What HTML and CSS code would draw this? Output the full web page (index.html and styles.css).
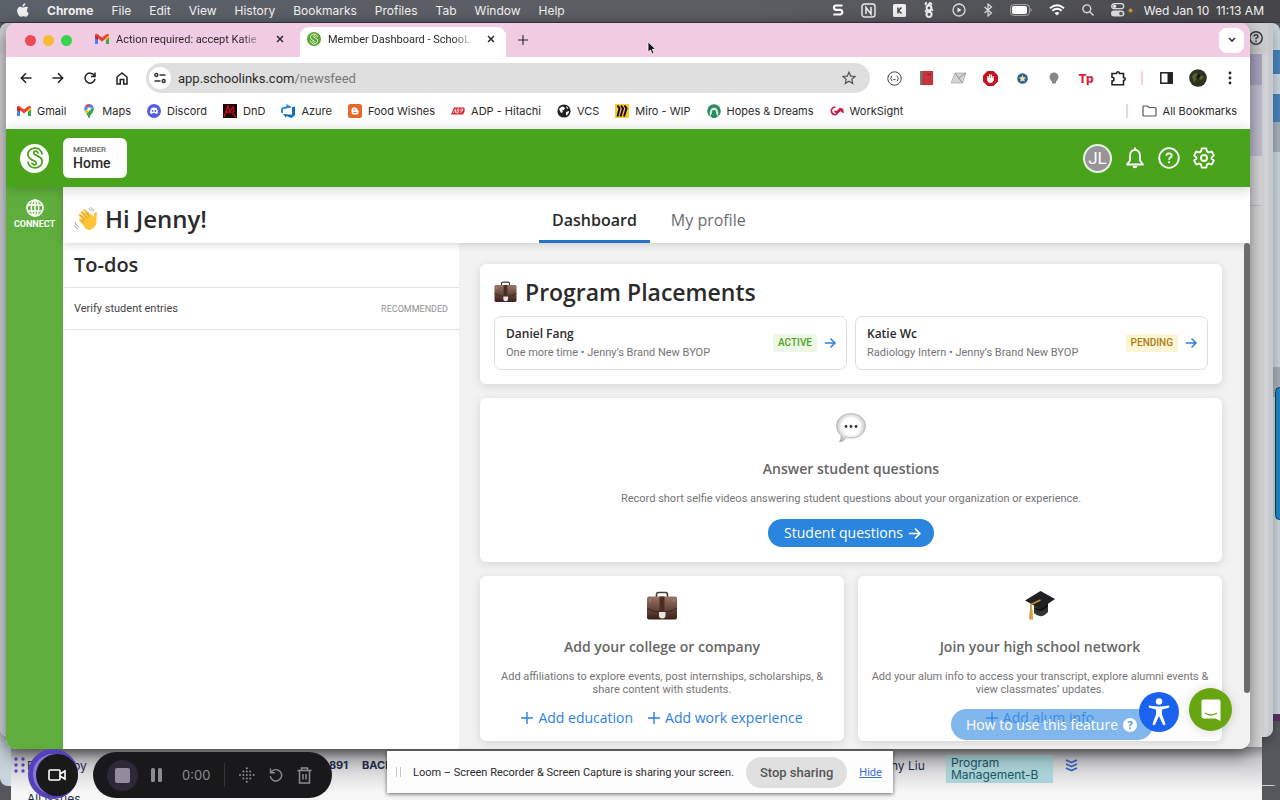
FILE: index.html
```html
<!DOCTYPE html>
<html lang="en">
<head>
  <meta charset="UTF-8">
  <title>Member Dashboard - SchooLinks</title>
  <link rel="stylesheet" href="styles.css">
</head>
<body>
  <!-- shared symbols -->
  <svg class="defs" width="0" height="0" aria-hidden="true">
    <defs>
      <linearGradient id="leather" x1="0" y1="0" x2="0" y2="1">
        <stop offset="0" stop-color="#9a7565"/><stop offset=".5" stop-color="#6b4a3e"/><stop offset="1" stop-color="#38211b"/>
      </linearGradient>
      <radialGradient id="bubble" cx=".5" cy=".45" r=".6">
        <stop offset=".5" stop-color="#fff"/><stop offset="1" stop-color="#aaa"/>
      </radialGradient>
      <symbol id="i-case" viewBox="0 0 30 30">
        <path d="M9.500 6V3.500Q9.500 1.500 11.500 1.500h7q2 0 2 2V6" fill="none" stroke="#4d3a33" stroke-width="1.600"/>
        <rect x="0" y="5.500" width="30" height="23" rx="2" fill="url(#leather)"/>
        <path d="M0 17q6 4 12 4h6q6 0 12-4" fill="none" stroke="#3a231c" stroke-width="1"/>
        <path d="M12.500 5.500h5V21h-5z" fill="#4b2c24"/>
        <path d="M12 21h6.500v3.500q0 3-3.200 3-3.300 0-3.300-3z" fill="#e8e4e2"/>
        <path d="M3 8v3M27 8v3" stroke="#b5937f" stroke-width=".8"/>
      </symbol>
      <symbol id="i-gmail" viewBox="0 0 14 14">
        <path d="M0 3.500V12h3V6z" fill="#4285f4"/><path d="M14 3.500V12h-3V6z" fill="#34a853"/>
        <path d="M0 4V3q1-2 3-.6L7 5.500l4-3.100q2-1.400 3 .6v1L7 9.500z" fill="#ea4335"/>
        <path d="M0 3.200 3 5.300V8L0 5.800z" fill="#c5221f"/><path d="M14 3.200 11 5.300V8l3-2.200z" fill="#fbbc04"/>
      </symbol>
      <symbol id="i-links" viewBox="0 0 24 24">
        <path d="M18 8.500C17.500 5 14.500 3.200 11.500 3.500 7.500 3.900 5.300 7 6 10c.4 1.700 1.500 2.600 3 3.400l3.200 1.600c1.700 1 1 3-.8 2.800-1-.1-1.500-.6-2-1.300M6 15.500C6.500 19 9.500 20.800 12.500 20.500 16.500 20.100 18.700 17 18 14c-.4-1.700-1.500-2.600-3-3.400l-3.200-1.600c-1.700-1-1-3 .8-2.800 1 .1 1.500.6 2 1.300" fill="none" stroke="currentColor" stroke-width="1.500" stroke-linecap="round"/>
      </symbol>
      <symbol id="i-arrow" viewBox="0 0 12 12">
        <path d="M.8 6h10M6.500 1.500 11 6l-4.500 4.500" fill="none" stroke="currentColor" stroke-width="1.500"/>
      </symbol>
      <symbol id="i-close" viewBox="0 0 8 8"><path d="m1 1 6 6M7 1 1 7" stroke="currentColor" stroke-width="1.500"/></symbol>
      <symbol id="i-plus" viewBox="0 0 12 12"><path d="M6 0v12M0 6h12" stroke="currentColor" stroke-width="1.400"/></symbol>
    </defs>
  </svg>

  <nav class="menubar">
    <svg width="12" height="14" viewBox="0 0 12 14" fill="#f0f0f0"><path d="M8.200 0q.2 1.900-1 2.900-.8.800-1.700.7Q5.400 2.200 6.300 1.200 7.200.2 8.200 0zM11.300 4.800Q9.800 5.800 9.900 7.400q.1 2 1.900 2.800-1 3-2.700 3.600-.7.100-1.400-.3-1.400-.6-2.700 0-1 .5-1.600.3Q1.200 13.100.4 9.600-.3 6.700 1 5.100 2.400 3.400 4.300 4q1.400.6 2 .5 2-.9 3-.8 1.300.2 2 1.100z"/></svg>
    <b>Chrome</b><span>File</span><span>Edit</span><span>View</span><span>History</span><span>Bookmarks</span><span>Profiles</span><span>Tab</span><span>Window</span><span>Help</span>
    <div class="status">
      <svg width="12" height="14" viewBox="0 0 12 14" fill="none" stroke="#fff" stroke-width="2.200"><path d="M10.500 2.500H4Q2 2.500 2 4.600t2 2.200h4q2.200 0 2.200 2.300T8 11.500H1.300"/></svg>
      <svg width="15" height="15" viewBox="0 0 15 15" fill="none" stroke="#eee"><rect x="1" y="1" width="13" height="13" rx="2.500" stroke-width="1.400"/><path d="M5 11V4.500l5 6.500V4" stroke-width="1.500"/></svg>
      <svg width="13" height="13" viewBox="0 0 13 13"><rect width="13" height="13" rx="1.500" fill="#eee"/><path d="M5 3.500v6M8.500 3.500 5.500 6.500l3 3" fill="none" stroke="#444" stroke-width="1.500"/></svg>
      <svg width="12" height="16" viewBox="0 0 12 16" fill="none" stroke="#eee" stroke-width="2"><circle cx="6" cy="6" r="2.400"/><circle cx="6" cy="12.300" r="2.600"/><path d="M3 3q-1-2 1-2.500M5 3.500 7 1l2 1.500M8.500 8.500 10 7.500M3.500 9.500 2 8.500"/></svg>
      <svg width="14" height="14" viewBox="0 0 14 14" fill="none" stroke="#ddd" stroke-width="1.300"><circle cx="7" cy="7" r="6"/><path d="M5.500 4.500v5L9.500 7z" fill="#eee" stroke="none"/></svg>
      <svg width="10" height="14" viewBox="0 0 10 14" fill="none" stroke="#ddd" stroke-width="1.200"><path d="m1.500 4 7 6L5 13V1l3.500 3-7 6"/></svg>
      <svg width="22" height="12" viewBox="0 0 22 12"><rect x=".6" y=".6" width="18.800" height="10.800" rx="3" fill="none" stroke="#aaa"/><rect x="2" y="2" width="15" height="8" rx="1.800" fill="#fff"/><path d="M20.500 4v4q1.200-.5 1.200-2t-1.200-2z" fill="#aaa"/></svg>
      <svg width="16" height="12" viewBox="0 0 16 12" fill="none" stroke="#fff" stroke-width="1.800"><path d="M1 4.200q7-6 14 0M3.300 6.800q4.700-4 9.400 0"/><path d="M5.500 9q2.500-2 5 0L8 11.600z" fill="#fff" stroke="none"/></svg>
      <svg width="12" height="12" viewBox="0 0 12 12" fill="none" stroke="#ddd" stroke-width="1.400"><circle cx="4.800" cy="4.800" r="3.900"/><path d="m7.700 7.700 3.800 3.800"/></svg>
      <svg width="22" height="14" viewBox="0 0 22 14"><rect x=".7" y=".7" width="12" height="5" rx="2.500" fill="none" stroke="#ddd" stroke-width="1.300"/><circle cx="3.500" cy="3.200" r="1.800" fill="#ddd"/><rect x="0" y="7.500" width="13.400" height="6" rx="3" fill="#ddd"/><circle cx="10" cy="10.500" r="1.800" fill="#555"/><circle cx="19.500" cy="7.500" r="2" fill="#d18b33"/></svg>
      <time>Wed Jan 10&nbsp; 11:13 AM</time>
    </div>
  </nav>

  <div class="desktop">
    <div class="win-far"><i class="far-blue"></i><i class="far-blue"></i><i class="far-grey"></i><i class="far-panel"></i><i class="far-purple"></i></div>
    <div class="far-handle"></div>
    <div class="win-back">
      <svg width="14" height="14" viewBox="0 0 14 14" fill="none" stroke="#333" stroke-width="1.400"><circle cx="7" cy="7" r="6.200"/><path d="M5 5.500Q5 3.700 7 3.700t2 1.800Q9 6.800 7 7.300v1M7 9.500V11"/></svg>
    </div>

    <section class="win-issues">
      <div class="issues-chrome"></div>
      <div class="issue-row">
        <svg width="16" height="16" viewBox="0 0 16 16" fill="#5b45c8"><circle cx="5" cy="2" r="1.700"/><circle cx="12" cy="2" r="1.700"/><circle cx="5" cy="8" r="1.700"/><circle cx="12" cy="8" r="1.700"/><circle cx="5" cy="14" r="1.700"/><circle cx="12" cy="14" r="1.700"/></svg>
        <span>Filtered by</span>
        <b class="key">SL-891</b>
        <b class="state">BACKLOG</b>
        <span>Jenny Liu</span>
        <span class="team">Program Management-B</span>
        <svg class="lowest" width="13" height="13" viewBox="0 0 13 13" fill="none" stroke="#3463c0" stroke-width="1.800"><path d="M1 1l5.500 2.500L12 1M1 5l5.500 2.500L12 5M1 9l5.500 2.500L12 9"/></svg>
      </div>
      <div class="all-issues">All issues</div>
    </section>

    <main class="browser">
      <div class="tabstrip">
        <div class="lights"><i></i><i></i><i></i></div>
        <div class="tab">
          <svg width="14" height="14"><use href="#i-gmail"/></svg>
          <span>Action required: accept Katie</span>
          <button aria-label="Close tab"><svg width="8" height="8"><use href="#i-close"/></svg></button>
        </div>
        <div class="tab active">
          <svg class="fav" width="14" height="14" viewBox="0 0 24 24"><use href="#i-links"/></svg>
          <span>Member Dashboard - SchooL</span>
          <button aria-label="Close tab"><svg width="8" height="8"><use href="#i-close"/></svg></button>
        </div>
        <button class="new-tab" aria-label="New tab"><svg width="10" height="10"><use href="#i-plus"/></svg></button>
        <button class="tab-search" aria-label="Search tabs"><svg width="8" height="6" viewBox="0 0 8 6" fill="none" stroke="#333" stroke-width="1.600"><path d="m1 1 3 3 3-3"/></svg></button>
      </div>

      <div class="toolbar">
        <button aria-label="Back"><svg width="12" height="12" viewBox="0 0 12 12" fill="none" stroke="#222" stroke-width="1.500"><path d="M11.500 6H1.500M6 1.300 1.300 6 6 10.700"/></svg></button>
        <button aria-label="Forward"><svg width="12" height="12" viewBox="0 0 12 12" fill="none" stroke="#222" stroke-width="1.500"><path d="M.5 6h10M6 1.300 10.700 6 6 10.700"/></svg></button>
        <button aria-label="Reload"><svg width="12" height="12" viewBox="0 0 12 12" fill="none" stroke="#222" stroke-width="1.500"><path d="M10.300 3.500A5 5 0 1 0 11 6.800M11 .5v4H7"/></svg></button>
        <button aria-label="Home"><svg width="12" height="13" viewBox="0 0 12 13" fill="none" stroke="#222" stroke-width="1.500"><path d="M1 12V5l5-4 5 4v7H7.700V7.500H4.300V12z"/></svg></button>
        <div class="omnibox">
          <i class="site"><svg width="12" height="12" viewBox="0 0 12 12" fill="none" stroke="#333" stroke-width="1.400"><circle cx="2.300" cy="3" r="1.500"/><path d="M5.500 3h6M.5 9h6"/><circle cx="9.700" cy="9" r="1.500"/></svg></i>
          <div class="url">app.schoolinks.com<span>/newsfeed</span></div>
          <svg width="14" height="14" viewBox="0 0 14 14" fill="none" stroke="#555" stroke-width="1.200"><path d="m7 1.200 1.700 3.900 4.300.4-3.200 2.800.9 4.200L7 10.300l-3.700 2.200.9-4.200L1 5.500l4.300-.4z"/></svg>
        </div>
        <div class="ext">
          <button aria-label="JSON"><svg width="15" height="15" viewBox="0 0 15 15" fill="none" stroke="#444"><circle cx="7.500" cy="7.500" r="6.700"/><path d="M5.300 5q-1 0-1 1.300 0 1-.8 1.200.8.200.8 1.200Q4.300 10 5.300 10M9.700 5q1 0 1 1.300 0 1 .8 1.200-.8.200-.8 1.200 0 1.300-1 1.300M6.500 8.500h2"/></svg></button>
          <button aria-label="Notes"><svg width="13" height="14" viewBox="0 0 13 14"><path d="M0 0h4v14H0z" fill="#6e7d68"/><path d="M2.500 0H13v14H2z" fill="#c8323c"/><path d="M7 3h4v1H7z" fill="#7c2228"/></svg></button>
          <button aria-label="Mail"><svg width="15" height="12" viewBox="0 0 15 12"><path d="M4 1h11l-3.500 10H0z" fill="#d4d4d4" stroke="#999" stroke-width=".6"/><path d="m4 1 3.500 5L15 1M11.500 11 7.500 6" fill="none" stroke="#888" stroke-width=".8"/></svg></button>
          <button aria-label="Ad block"><svg width="15" height="15" viewBox="0 0 15 15"><path d="M4.500 0h6L15 4.500v6L10.500 15h-6L0 10.500v-6z" fill="#c5141f"/><path d="M4.800 8V5M6.600 7V3.500M8.400 7V3.500M10.200 7V5" stroke="#fff" stroke-width="1.300"/><path d="M4.100 7h6.700v2q-.5 3-3.300 3T4.100 9z" fill="#fff"/></svg></button>
          <button aria-label="Star"><svg width="11" height="11" viewBox="0 0 11 11"><circle cx="5.500" cy="5.500" r="5.300" fill="#2b5f97"/><path d="m5.500 1.800 1 2.500 2.700.2-2 1.700.6 2.700-2.300-1.500-2.300 1.500.6-2.700-2-1.700 2.700-.2z" fill="#f2e3a0"/></svg></button>
          <button aria-label="Bulb"><svg width="10" height="12" viewBox="0 0 10 12" fill="#888"><circle cx="5" cy="5" r="4.500"/><path d="M3 8h4v3.500H3z"/></svg></button>
          <button class="tp" aria-label="Tp">Tp</button>
          <button aria-label="Extensions"><svg width="15" height="15" viewBox="0 0 15 15" fill="none" stroke="#222" stroke-width="1.600"><path d="M1 2.500h4.500q0-1.700 1.500-1.700t1.500 1.700h4V6.500q1.700 0 1.700 1.500t-1.700 1.500v4.300H1V10q2 0 2-1.800T1 6.300z"/></svg></button>
          <i class="divider"></i>
          <button aria-label="Side panel"><svg width="13" height="12" viewBox="0 0 13 12"><rect x=".8" y=".8" width="11.400" height="10.400" fill="none" stroke="#222" stroke-width="1.500"/><path d="M7.500 1H12v10H7.500z" fill="#222"/></svg></button>
          <button aria-label="Profile"><svg width="18" height="18" viewBox="0 0 18 18"><circle cx="9" cy="9" r="8.800" fill="#2c3320"/><path d="M3 7q4-5 8-2l4 3-3 3-4-2-3 5z" fill="#566035"/><path d="M9 4l3 2-2 4-3-1z" fill="#15190f"/></svg></button>
          <button aria-label="More"><svg width="4" height="14" viewBox="0 0 4 14" fill="#222"><circle cx="2" cy="2" r="1.400"/><circle cx="2" cy="7" r="1.400"/><circle cx="2" cy="12" r="1.400"/></svg></button>
        </div>
      </div>

      <div class="bookmarks">
        <a href="#"><svg width="14" height="14"><use href="#i-gmail"/></svg>Gmail</a>
        <a href="#"><svg width="14" height="14" viewBox="0 0 14 14"><path d="M7 0a5 5 0 0 0-4 2l4 3z" fill="#ea4335"/><path d="M7 0a5 5 0 0 1 4.700 3.500L7 5z" fill="#4285f4"/><path d="M3 2a5 5 0 0 0-.4 5L7 5z" fill="#4285f4"/><path d="M11.700 3.500Q12.500 6 10.500 9 8 11 7.500 14h-1Q6 12 4.500 10L8 5.500z" fill="#34a853"/><path d="M2.600 7 4.500 10 8 6z" fill="#fbbc04"/><circle cx="7" cy="5" r="1.800" fill="#fff"/></svg>Maps</a>
        <a href="#"><svg width="14" height="14" viewBox="0 0 14 14"><circle cx="7" cy="7" r="7" fill="#5661e0"/><path d="M4.500 4Q7 3 9.500 4q1.700 3 1.500 5l-2 1-.8-1H5.800L5 10 3 9q-.2-2 1.500-5z" fill="#fff"/><circle cx="5.600" cy="7" r=".9" fill="#5661e0"/><circle cx="8.400" cy="7" r=".9" fill="#5661e0"/></svg>Discord</a>
        <a href="#"><svg width="14" height="14" viewBox="0 0 14 14"><path d="M0 0h14v14H0z" fill="#230408"/><path d="m1 13 4-11 2 5 3-4 1 4-2 2 4 4M3 8h5" fill="none" stroke="#b3101f" stroke-width="1.500"/></svg>DnD</a>
        <a href="#"><svg width="14" height="14" viewBox="0 0 14 14"><path d="M14 2.500v8.700L10.500 14 5 12v2l-3-4 9 .7V3.300z" fill="#0f6cc9"/><path d="M11 3.300 5.500 0v2.200L1.200 3.500 0 5v3.500l2 .9V5.200z" fill="#2a86de"/></svg>Azure</a>
        <a href="#"><svg width="14" height="14" viewBox="0 0 14 14"><rect width="14" height="14" rx="2.500" fill="#e8672a"/><path d="M3.500 5.500q0-2 2-2h1.800q2 0 2 2 .1.800 1.200.9v2.200q0 2-2 2h-3q-2 0-2-2z" fill="#fff"/><path d="M5.500 5.700h1.800M5.500 8.500h3" stroke="#e8672a" stroke-width="1.100"/></svg>Food Wishes</a>
        <a href="#"><svg width="14" height="14" viewBox="0 0 14 14"><path d="M3 3.500h10q2 3-1 7H0z" fill="#d6293a"/><path d="m2 9 2.500-4v4M6.500 5h1.500l-.8 4H5.700zM10 9V5h2l-.7 2H10" fill="none" stroke="#fff" stroke-width=".7"/></svg>ADP - Hitachi</a>
        <a href="#"><svg width="14" height="14" viewBox="0 0 14 14"><circle cx="7" cy="7" r="6.600" fill="#202124"/><path d="M2 5q2-3 4-2.500L8 4 7 6 5 6.500 6 8l-2 1zM9 8l3-1q0 3-3 4.500zM9 2l2.500 2L10 5z" fill="#fff"/></svg>VCS</a>
        <a href="#"><svg width="14" height="14" viewBox="0 0 14 14"><path d="M0 0h14v14H0z" fill="#f9cc2c"/><path d="m2.500 1.500 2 3-2 8M6 1.500l2 3-2.500 8M9.500 1.500l2 3-2.500 8" fill="none" stroke="#16082e" stroke-width="2"/></svg>Miro - WIP</a>
        <a href="#"><svg width="14" height="14" viewBox="0 0 14 14"><circle cx="7" cy="7" r="6.800" fill="#2e8a63"/><path d="M3 13Q1.500 4 7 3.500 12.500 4 11 13L9 9V7q-2-2-4 0v2z" fill="#d5ebe0"/><path d="m5 14 2-6 2 6z" fill="#2e8a63"/></svg>Hopes &amp; Dreams</a>
        <a href="#"><svg width="14" height="14" viewBox="0 0 14 14" fill="none" stroke="#c21d4c" stroke-width="1.700"><path d="M5.500 3Q1.500 3.500 1.300 7q.7 4 4.700 3.500L10.500 6l3 2.500M4.500 7l2 1.500L10 4.500q2.500 0 3.200 2"/></svg>WorkSight</a>
        <i class="divider"></i>
        <a href="#"><svg width="15" height="12" viewBox="0 0 15 12" fill="none" stroke="#555" stroke-width="1.200"><path d="M1 10V2q0-1 1-1h3.500L7 2.500h6q1 0 1 1V10q0 1-1 1H2q-1 0-1-1z"/></svg>All Bookmarks</a>
      </div>

      <div class="app">
        <header class="topbar">
          <a class="logo" href="#" aria-label="SchooLinks"><svg width="28" height="28"><use href="#i-links"/></svg></a>
          <button class="role"><small>MEMBER</small>Home</button>
          <div class="actions">
            <span class="avatar">JL</span>
            <button aria-label="Notifications"><svg width="20" height="22" viewBox="0 0 20 22" fill="none" stroke="#fff" stroke-width="1.800"><path d="M10 2.800Q5 3 5 9v4.500L2 17.500h16L15 13.500V9q0-6-5-6.200z" stroke-linejoin="round"/><path d="M10 .5V3"/><path d="M7.500 19h5q-.5 2.300-2.500 2.300T7.500 19z" fill="#fff" stroke="none"/></svg></button>
            <button aria-label="Help"><svg width="22" height="22" viewBox="0 0 22 22" fill="none" stroke="#fff" stroke-width="1.800"><circle cx="11" cy="11" r="9.800"/><path d="M8.300 8.800Q8.300 6.300 11 6.300t2.700 2.300q0 1.400-1.500 2.200Q11 11.500 11 12.800M11 14.300v2"/></svg></button>
            <button aria-label="Settings"><svg width="22" height="22" viewBox="0 0 24 24" fill="none" stroke="#fff" stroke-width="2" stroke-linejoin="round"><circle cx="12" cy="12" r="3.300"/><path d="M9.500 1.500h5l.7 3.300 2 1.200 3.200-1.100 2.400 4.200-2.500 2.200v1.400l2.500 2.200-2.400 4.200-3.200-1.100-2 1.200-.7 3.300h-5l-.7-3.300-2-1.200-3.200 1.100-2.400-4.200 2.500-2.200v-1.400L1.200 9.100l2.400-4.200L6.800 6l2-1.200z"/></svg></button>
          </div>
        </header>

        <div class="body">
          <aside class="rail">
            <a href="#"><svg width="18" height="18" viewBox="0 0 18 18" fill="none" stroke="#fff" stroke-width="1.600"><circle cx="9" cy="9" r="8"/><ellipse cx="9" cy="9" rx="3.700" ry="8"/><path d="M1.500 6h15M1.500 12h15M9 1v16"/></svg>CONNECT</a>
          </aside>
          <div class="page">
            <div class="subhead">
              <h1>
                <svg width="24" height="24" viewBox="0 0 24 24"><path d="m5 13 6.500 8.500q4 3 8-.5 3.500-3 3-9l.5-6q-1-2-2.500 0l-.7 3.500L11 2.500Q9.500 1.500 9 3l3 4.500L8 4Q6.300 3.500 6.500 5.300l3.500 4.500-4-3q-1.700-.3-1.500 1.500l4 4.500L6.500 11.500Q4.500 11 5 13z" fill="#fbc53a"/><path d="m8 5 5.500 6.500M6 8l5 5.500M12 5l4 5.500M7 13l3.500 3.500" stroke="#dd962a" stroke-width=".9"/><path d="M14.500 1.500q2.500 1 3.500 3M16.500.5Q19 1.800 20 4M1 15q.2 3.500 4 5M.5 18.500Q1.500 21 4 22" fill="none" stroke="#999" stroke-width=".9"/></svg>
                Hi Jenny!
              </h1>
              <nav class="page-tabs">
                <a class="on" href="#">Dashboard</a>
                <a href="#">My profile</a>
              </nav>
            </div>
            <div class="columns">
              <section class="todos">
                <h2>To-dos</h2>
                <a class="todo" href="#">Verify student entries <span>RECOMMENDED</span></a>
              </section>
              <section class="feed">
                <article class="card placements">
                  <h2><svg width="23" height="22"><use href="#i-case"/></svg>Program Placements</h2>
                  <div class="placement-list">
                    <a class="placement" href="#">
                      <div><h3>Daniel Fang</h3><p>One more time • Jenny’s Brand New BYOP</p></div>
                      <span class="tag active">ACTIVE</span>
                      <svg width="12" height="12"><use href="#i-arrow"/></svg>
                    </a>
                    <a class="placement" href="#">
                      <div><h3>Katie Wc</h3><p>Radiology Intern • Jenny’s Brand New BYOP</p></div>
                      <span class="tag pending">PENDING</span>
                      <svg width="12" height="12"><use href="#i-arrow"/></svg>
                    </a>
                  </div>
                </article>
                <article class="card promo wide">
                  <svg width="30" height="30" viewBox="0 0 30 30"><path d="M15 .7c8.500 0 14.300 5 14.300 12.100S23.500 25 15 25q-2.500 0-4.500-.5-3.500 4-7 4.500 2-2.500 1.700-6.500Q.7 19 .7 12.800C.7 5.700 6.500.7 15 .7z" fill="url(#bubble)" stroke="#aaa" stroke-width=".8"/><circle cx="10" cy="13.500" r="1.400" fill="#333"/><circle cx="15" cy="13.500" r="1.400" fill="#333"/><circle cx="20" cy="13.500" r="1.400" fill="#333"/></svg>
                  <h3>Answer student questions</h3>
                  <p>Record short selfie videos answering student questions about your organization or experience.</p>
                  <button class="cta">Student questions <svg width="13" height="13"><use href="#i-arrow"/></svg></button>
                </article>
                <article class="card promo">
                  <svg width="30" height="30"><use href="#i-case"/></svg>
                  <h3>Add your college or company</h3>
                  <p>Add affiliations to explore events, post internships, scholarships, &amp; share content with students.</p>
                  <div class="links">
                    <a href="#"><svg width="12" height="12"><use href="#i-plus"/></svg>Add education</a>
                    <a href="#"><svg width="12" height="12"><use href="#i-plus"/></svg>Add work experience</a>
                  </div>
                </article>
                <article class="card promo">
                  <svg width="30" height="30" viewBox="0 0 30 30"><path d="M9 14v8q7 7 14-1v-9z" fill="#333"/><path d="M9 17q7 7 14-2v-2l-8 5z" fill="#111"/><path d="M0 9.500 15.500 0 30 8 15.500 18z" fill="#202124"/><path d="M15.500 9 6 13.500V20" fill="none" stroke="#c98a2d" stroke-width="1.600"/><path d="m5 18 2.500.5.5 10H4z" fill="#d99b39"/></svg>
                  <h3>Join your high school network</h3>
                  <p>Add your alum info to access your transcript, explore alumni events &amp; view classmates’ updates.</p>
                  <div class="links">
                    <a href="#"><svg width="12" height="12"><use href="#i-plus"/></svg>Add alum info</a>
                  </div>
                </article>
              </section>
            </div>
          </div>
        </div>
        <i class="scroll-thumb"></i>
        <button class="howto">How to use this feature <span>?</span></button>
        <button class="a11y" aria-label="Accessibility"><svg width="22" height="28" viewBox="0 0 22 28" fill="#fff"><circle cx="11" cy="3.500" r="3.200"/><path d="M1 7.500q10 2 20 0 1 1.500-.2 2.300L14 11.500v5L17.500 26q-1 2-2.500.8L11 18l-4 8.800Q5.500 28 4.500 26L8 16.500v-5L1.200 9.800Q0 9 1 7.500z"/></svg></button>
        <button class="chat" aria-label="Chat"><svg width="20" height="22" viewBox="0 0 20 22"><path d="M2.500.5h15q2 0 2 2V22l-5-2.500h-12q-2 0-2-2v-15q0-2 2-2z" fill="#fff"/><path d="M4 14q6 4 12 0" fill="none" stroke="#67a511" stroke-width="1.300"/></svg></button>
      </div>
    </main>

    <i class="loom-ring"></i>
    <button class="loom-cam" aria-label="Camera"><svg width="18" height="12" viewBox="0 0 18 12" fill="none" stroke="#fff" stroke-width="1.600"><rect x="1" y="1" width="11" height="10" rx="1"/><path d="m12 5 5-3v8l-5-3"/></svg></button>
    <div class="loom-bar">
      <button class="stop" aria-label="Stop"><i></i></button>
      <svg width="12" height="14" viewBox="0 0 12 14" fill="#8c8c90"><rect x="0" y="0" width="4" height="14" rx="1.500"/><rect x="7" y="0" width="4" height="14" rx="1.500"/></svg>
      <time>0:00</time>
      <i class="bar-divider"></i>
      <svg width="16" height="16" viewBox="0 0 16 16" stroke="#8c8c90" stroke-width="2" stroke-linecap="round" stroke-dasharray="0 3.400" fill="none"><path d="M1 8h15M4.400 4.600h8M4.400 11.400h8M7.800 1.200v14"/></svg>
      <svg width="14" height="14" viewBox="0 0 14 14" fill="none" stroke="#8c8c90" stroke-width="1.400"><path d="M2 4.500A5.700 5.700 0 1 1 1.300 8M1.500.5v4.300h4.300"/></svg>
      <svg width="15" height="17" viewBox="0 0 15 17" fill="none" stroke="#8c8c90" stroke-width="1.500"><path d="M.5 3.500h14M4.500 3.500V1h6v2.500M2.500 3.500V16h10V3.500M6 7v5.500M9 7v5.500"/></svg>
    </div>
    <div class="share-bar">
      <i class="grip"></i>
      <span>Loom – Screen Recorder &amp; Screen Capture is sharing your screen.</span>
      <button>Stop sharing</button>
      <a href="#">Hide</a>
    </div>
    <svg class="cursor" width="10" height="14" viewBox="0 0 10 14"><path d="M1 .8v10.400l2.400-2.200 1.800 4 1.800-.8-1.700-3.900h3.300z" fill="#111" stroke="#fff" stroke-width=".8"/></svg>
  </div>
</body>
</html>
```
FILE: styles.css
```css
* { box-sizing: border-box; }
body {
  margin: 0; height: 100vh; overflow: hidden; display: flex; flex-direction: column;
  font-family: Inter, "Liberation Sans", sans-serif; font-size: 11px; color: #2b2b2b; background: #55575c;
}
h1, h2, h3, p { margin: 0; }
a { color: inherit; text-decoration: none; }
button { border: 0; padding: 0; background: none; font: inherit; color: inherit; display: flex; align-items: center; justify-content: center; }
svg { flex: none; display: block; }
.defs { position: absolute; }

/* mac menu bar */
.menubar {
  display: flex; align-items: center; gap: 18px; height: 23px; padding: 0 16px 2px 17px; flex: none;
  background: linear-gradient(90deg, #5b6168, #5b5d62 60%, #46464a); border-bottom: 1px solid #3d3440;
  color: #f2f2f2; font-size: 12px; white-space: nowrap;
}
.status { margin-left: auto; display: flex; align-items: center; gap: 17px; }
.status time { margin-left: -6px; }

.desktop { position: relative; flex: 1; background: #55575c; }

/* windows behind */
.win-far { position: absolute; top: 0; right: 0; bottom: 14px; left: 0; background: #c9d4dc; border-radius: 8px; display: flex; flex-direction: column; align-items: flex-end; }
.win-far i { width: 8px; }
.far-blue { height: 24px; margin-top: 27px; background: #4682b8; }
.far-blue + .far-blue { height: 28px; margin-top: 20px; }
.far-grey { height: 30px; background: #a4b0bc; }
.far-panel { height: 30px; margin-top: 215px; background: #a4adb4; }
.win-far .far-purple { width: 18px; height: 7px; margin-top: 317px; background: #5a2f63; box-shadow: 0 64px 0 64px #55575c; clip-path: inset(0 0 -64px 0); }
.far-handle { position: absolute; top: 364px; right: -4px; width: 9px; height: 133px; border: 1px solid #0f3e5c; border-radius: 5px; background: #1d87c4; }
.win-back {
  position: absolute; top: 0; right: 7px; bottom: 63px; left: 0; border-radius: 8px;
  background: linear-gradient(#cfcfd2 30px, #d4d5d8 30px); border-right: 5px solid #c6c9cd; box-shadow: 0 4px 12px rgba(0,0,0,.3);
}
.win-back svg { position: absolute; top: 8px; right: 5px; }

.win-issues {
  position: absolute; top: 31px; right: 18px; bottom: 0; left: 11px; background: #dadada;
  display: flex; flex-direction: column; overflow: hidden; font-size: 12px; color: #1f2a4a;
}
.issues-chrome { height: 152px; flex: none; border-bottom: 1px solid #c4c4c8; background: linear-gradient(#a9a6c2 31px, #c3c1d2 31px 102px, #dcdce0 102px); }
.issue-row {
  display: grid; grid-template-columns: 16px 260px 61px 1fr 76px 107px 209px; align-items: center; white-space: nowrap;
  margin-top: auto; height: 43px; flex: none; padding-bottom: 10px; background: linear-gradient(#8e8e92, #c9c9cc 12px, #f4f4f5);
}
.key { text-align: right; font-size: 11px; }
.state { padding-left: 14px; font-size: 11px; }
.team { white-space: normal; margin-top: 8px; padding: 2px 5px; line-height: 12px; background: #a9d3d8; color: #1e5560; }
.lowest { margin-left: 12px; }
.all-issues { height: 10px; flex: none; padding-left: 16px; line-height: 18px; background: #f6f6f7; }

/* browser */
.browser {
  position: absolute; top: 0; right: 30px; bottom: 51px; left: 6px; display: flex; flex-direction: column;
  border-radius: 10px; overflow: hidden; background: #fff; box-shadow: 0 6px 18px rgba(0,0,0,.5);
}
.tabstrip { height: 34px; padding: 4px 6px 0 19px; flex: none; display: flex; align-items: center; background: #f1cce3; }
.lights { display: flex; gap: 7px; width: 61px; padding-bottom: 4px; }
.lights i { width: 11px; height: 11px; border-radius: 50%; background: #ee4a55; }
.lights i:nth-child(2) { background: #f5bb33; }
.lights i:nth-child(3) { background: #35d64b; }
.tab { display: flex; align-items: center; gap: 7px; height: 30px; width: 214px; padding: 0 10px 6px 9px; font-family: Roboto, "Liberation Sans", sans-serif; }
.tab span { flex: 1; white-space: nowrap; mask-image: linear-gradient(90deg, #000 86%, transparent); }
.tab button { width: 20px; height: 20px; }
.tab.active { width: 206px; padding: 0 5px 6px 7px; background: #fff; border-radius: 9px 9px 0 0; }
.fav { color: #fff; background: #5aa52c; border-radius: 50%; }
.new-tab { width: 34px; height: 24px; margin-bottom: 4px; }
.tab-search { width: 25px; height: 25px; margin: 0 0 4px auto; border-radius: 8px; background: #fff; }

.toolbar { display: flex; align-items: center; height: 42px; padding: 0 4px; flex: none; }
.toolbar button { width: 32px; height: 32px; }
.omnibox { flex: 1; display: flex; align-items: center; height: 30px; margin: 0 8px; padding: 0 14px 0 3px; border-radius: 15px; background: #dfdfdf; }
.site { display: flex; align-items: center; justify-content: center; width: 22px; height: 22px; border-radius: 50%; background: #fff; }
.url { flex: 1; padding-left: 7px; font-family: Roboto, "Liberation Sans", sans-serif; font-size: 13px; }
.url span { color: #777; }
.ext { display: flex; align-items: center; }
.divider { width: 2px; height: 14px; background: #f3cfe3; }
.ext .divider { margin: 0 7px; }
.toolbar .tp { color: #d9223b; font-weight: 800; font-size: 12px; }
.bookmarks { display: flex; align-items: center; gap: 16px; height: 30px; padding: 0 13px 6px 11px; flex: none; white-space: nowrap; }
.bookmarks a { display: flex; align-items: center; gap: 6px; }
.bookmarks .divider { margin-left: auto; margin-right: -2px; }

/* app */
.app { flex: 1; min-height: 0; position: relative; display: flex; flex-direction: column; font-family: Roboto, "Liberation Sans", sans-serif; }
.topbar { position: relative; z-index: 1; display: flex; align-items: center; height: 58px; padding: 0 35px 0 14px; flex: none; background: #49a31b; box-shadow: 0 2px 12px rgba(0,0,0,.2); }
.logo { display: flex; align-items: center; justify-content: center; width: 29px; height: 29px; border-radius: 50%; background: #fff; color: #49a31b; }
.role { width: 64px; height: 40px; margin-left: 14px; padding-left: 10px; flex-direction: column; align-items: flex-start; border-radius: 6px; background: #fff; font-size: 14px; font-weight: 500; line-height: 16px; }
.role small { font-size: 8px; line-height: 10px; color: #666; }
.actions { margin-left: auto; display: flex; align-items: center; gap: 13px; }
.avatar { width: 29px; height: 29px; line-height: 25px; text-align: center; border: 2px solid #e8f3e2; border-radius: 50%; background: #98959a; color: #fff; font-size: 17px; }
.body { flex: 1; min-height: 0; display: flex; }
.rail { width: 57px; padding-top: 12px; flex: none; background: #5fae3d; color: #fff; }
.rail a { display: flex; flex-direction: column; align-items: center; gap: 2px; font-size: 9px; font-weight: 700; line-height: 10px; }
.page { flex: 1; min-width: 0; display: flex; flex-direction: column; }

.subhead { position: relative; display: flex; align-items: stretch; height: 56px; flex: none; background: #fff; box-shadow: 0 1px 8px rgba(0,0,0,.18); }
.subhead h1 { display: flex; align-items: center; gap: 7px; width: 476px; padding: 8px 0 0 11px; font: 600 24px/28px "Open Sans", Lato, sans-serif; }
.page-tabs { display: flex; gap: 8px; font: 400 16px/20px "Open Sans", Lato, sans-serif; color: #6d6d6d; }
.page-tabs a { padding: 23px 13px 0; }
.page-tabs .on { font-weight: 600; color: #2b2b2b; border-bottom: 3px solid #2672ca; }

.columns { flex: 1; min-height: 0; display: flex; }
.todos { width: 396px; flex: none; background: #fff; }
.todos h2 { padding: 8px 11px; border-bottom: 1px solid #e2e2e2; font: 600 20px/28px "Open Sans", Lato, sans-serif; }
.todo { display: flex; align-items: center; justify-content: space-between; height: 42px; padding: 0 11px; border-bottom: 1px solid #e2e2e2; color: #444; }
.todo span { font-size: 9px; color: #929292; }
.feed { flex: 1; min-width: 0; display: grid; grid-template-columns: 1fr 1fr; align-content: start; gap: 14px; padding: 21px 28px 0 21px; background: #f2f2f2; }
.card { border-radius: 6px; background: #fff; box-shadow: 0 2px 8px rgba(0,0,0,.12); }
.placements { grid-column: span 2; padding: 14px; }
.placements h2 { display: flex; align-items: center; gap: 8px; font: 600 23px/28px "Open Sans", Lato, sans-serif; }
.placement-list { display: grid; grid-template-columns: 1fr 1fr; gap: 8px; margin-top: 10px; }
.placement { display: flex; align-items: center; gap: 7px; height: 54px; padding: 0 10px 0 11px; border: 1px solid #dfdfdf; border-radius: 7px; color: #2d7fe0; }
.placement div { flex: 1; color: #2b2b2b; }
.placement h3 { font: 600 12px/18px "Open Sans", Lato, sans-serif; }
.placement p { margin-top: 2px; line-height: 16px; color: #757575; }
.tag { padding: 0 5px; border-radius: 3px; font-size: 10px; font-weight: 500; line-height: 18px; }
.tag.active { background: #edf7e6; color: #4ba324; }
.tag.pending { background: #fdf5d3; color: #a97f17; }

.promo { display: flex; flex-direction: column; align-items: center; padding: 15px 8px; text-align: center; }
.promo.wide { grid-column: span 2; }
.promo h3 { margin-top: 16px; font: 600 14px/20px "Open Sans", Lato, sans-serif; color: #666; }
.promo p { margin: 13px 0 14px; max-width: 342px; line-height: 13px; color: #757575; }
.promo.wide p { max-width: none; }
.cta { gap: 5px; height: 28px; padding: 0 13px 0 16px; border-radius: 14px; background: #2985de; color: #fff; font: 500 14px/20px "Open Sans", Lato, sans-serif; }
.links { display: flex; gap: 15px; font: 500 14px/16px "Open Sans", Lato, sans-serif; color: #2d7fe0; }
.links a { display: flex; align-items: center; gap: 5px; }

/* floating over the page */
.scroll-thumb { position: absolute; top: 114px; right: 0; width: 6px; height: 450px; border-radius: 3px; background: #6c6c6c; }
.howto { position: absolute; right: 97px; bottom: 9px; height: 31px; padding: 0 16px 0 15px; gap: 5px; border-radius: 16px; background: rgba(66,145,228,.66); color: #fff; font: 400 14px/20px "Open Sans", Lato, sans-serif; }
.howto span { width: 14px; border-radius: 50%; background: #fff; color: #4f97dd; font-size: 11px; font-weight: 700; line-height: 14px; }
.a11y { position: absolute; right: 71px; bottom: 17px; width: 40px; height: 40px; border-radius: 50%; background: #1b63ee; }
.chat { position: absolute; right: 18px; bottom: 18px; width: 43px; height: 43px; border-radius: 50%; background: #67a511; box-shadow: 0 1px 12px rgba(0,0,0,.15); }

/* screen recorder */
.loom-ring { position: absolute; left: 28px; bottom: 1px; width: 50px; height: 50px; border: 5px solid #5541bb; border-radius: 50%; background: #8a79dc; }
.loom-cam { position: absolute; left: 36px; bottom: 4px; width: 42px; height: 42px; border-radius: 50%; background: #19191a; }
.loom-bar { position: absolute; left: 93px; bottom: 2px; display: flex; align-items: center; height: 46px; padding: 0 20px 0 14px; gap: 14px; border-radius: 23px; background: #19191b; color: #8c8c90; font-size: 13px; }
.loom-bar .stop { width: 31px; height: 31px; margin-right: -1px; border-radius: 50%; background: #2d2836; }
.stop i { width: 15px; height: 15px; border-radius: 2px; background: #938b9d; }
.loom-bar time { margin-left: 5px; }
.bar-divider { width: 1px; height: 24px; background: #333; }
.share-bar { position: absolute; left: 387px; bottom: 7px; display: flex; align-items: center; height: 42px; padding: 0 11px 0 9px; gap: 12px; background: #fdfdfd; box-shadow: 0 1px 4px rgba(0,0,0,.6); font-family: Roboto, sans-serif; font-size: 11px; white-space: nowrap; }
.share-bar button { height: 31px; padding: 0 14px; border-radius: 16px; background: #e0e0e0; color: #555; font-weight: 500; font-size: 13px; }
.share-bar a { color: #3c6fd0; text-decoration: underline; }
.grip { width: 5px; height: 10px; border: solid #c4c4c4; border-width: 0 1px; }
.cursor { position: absolute; left: 647px; top: 18px; }
```
